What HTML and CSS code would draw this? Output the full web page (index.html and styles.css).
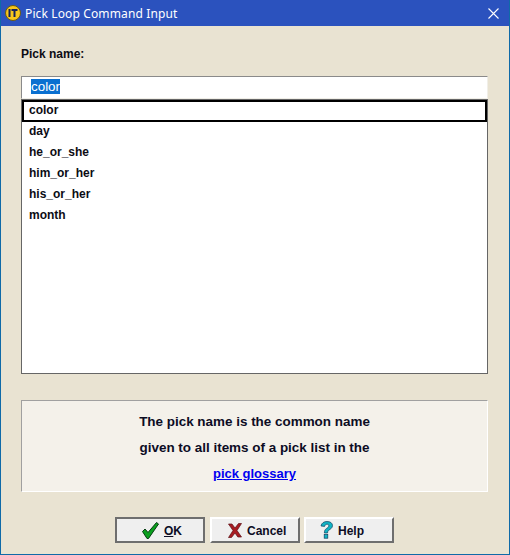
FILE: index.html
```html
<!DOCTYPE html>
<html lang="en">
<head>
    <meta charset="UTF-8">
    <meta name="viewport" content="width=device-width, initial-scale=1.0">
    <title>Pick Loop Command Input</title>
    <link rel="stylesheet" href="styles.css">
</head>
<body>
    <div class="window">
        <div class="titlebar">
            <svg class="app-icon" width="16" height="16" viewBox="0 0 16 16">
                <circle cx="8" cy="8" r="7.5" fill="#f7c61c" stroke="#6b5a10" stroke-width="1"/>
                <rect x="3.5" y="4" width="2" height="8" fill="#14205a"/>
                <rect x="6.5" y="4" width="6" height="2" fill="#14205a"/>
                <rect x="8.5" y="4" width="2" height="8" fill="#14205a"/>
            </svg>
            <span class="title">Pick Loop Command Input</span>
            <svg class="close" width="11" height="11" viewBox="0 0 11 11">
                <path d="M0.5 0.5L10.5 10.5M10.5 0.5L0.5 10.5" stroke="#fff" stroke-width="1.1" fill="none"/>
            </svg>
        </div>

        <div class="content">
            <div class="pick-label">Pick name:</div>

            <div class="pick-input"><span class="selected">color</span></div>

            <ul class="pick-list">
                <li class="current">color</li>
                <li>day</li>
                <li>he_or_she</li>
                <li>him_or_her</li>
                <li>his_or_her</li>
                <li>month</li>
            </ul>

            <div class="info">
                <p>The pick name is the common name</p>
                <p>given to all items of a pick list in the</p>
                <p><a href="#">pick glossary</a></p>
            </div>

            <div class="buttons">
                <button class="btn btn-ok">
                    <svg width="17" height="17" viewBox="0 0 17 17">
                        <path d="M0.5 9.5L3 7L6 10.5L14.5 0.5L16.5 2L6.5 16.5H5Z" fill="#0aa01e" stroke="#043a10" stroke-width="1"/>
                    </svg>
                    <span class="btn-text"><u>O</u>K</span>
                </button>
                <button class="btn btn-cancel">
                    <svg width="14" height="15" viewBox="0 0 14 15">
                        <path d="M0.5 1H4L7 5L10.5 0.5H13.5L9 7.5L13.5 14H9.8L7 10L3.5 14.5H0.5L5 7.5Z" fill="#a81c22" stroke="#5c1016" stroke-width="0.7"/>
                    </svg>
                    <span class="btn-text">Cancel</span>
                </button>
                <button class="btn btn-help">
                    <svg width="13" height="18" viewBox="0 0 13 18">
                        <path d="M1 5C1.5 2 4 0.5 7 0.5C10.5 0.5 12.5 2.2 12.5 4.6C12.5 7 10.5 8 8.8 9.2C7.8 10 7.6 10.8 7.6 12H4.4C4.4 9.8 4.8 8.6 6.6 7.4C8 6.4 8.8 5.8 8.8 4.8C8.8 3.8 8 3.2 7 3.2C5.8 3.2 5 4 4.6 5.4Z" fill="#12b4c4" stroke="#0a3f60" stroke-width="0.7"/>
                        <rect x="4.2" y="13.6" width="3.6" height="3.6" fill="#12b4c4" stroke="#0a3f60" stroke-width="0.7"/>
                    </svg>
                    <span class="btn-text">Help</span>
                </button>
            </div>
        </div>
    </div>
</body>
</html>
```

FILE: styles.css
```css
html, body {
    margin: 0;
    padding: 0;
}
body {
    width: 510px;
    height: 555px;
    overflow: hidden;
    font-family: "Liberation Sans", Arial, sans-serif;
}
.window {
    box-sizing: border-box;
    width: 510px;
    height: 555px;
    border: 1px solid #0f6aa8;
    border-top: 0;
    background-color: #e9e3d2;
}
.titlebar {
    display: flex;
    align-items: center;
    height: 26px;
    padding-left: 4px;
    padding-right: 10px;
    background-color: #2b52be;
    color: #fff;
}
.app-icon {
    margin-right: 4px;
}
.title {
    flex: 1;
    font-family: "Noto Sans", sans-serif;
    font-size: 12px;
    letter-spacing: 0.13px;
}
.content {
    padding: 0 21px 0 20px;
}
.pick-label {
    margin-top: 21px;
    height: 29px;
    line-height: 15px;
    font-size: 12px;
    font-weight: bold;
    color: #0c0c14;
}
.pick-input {
    box-sizing: border-box;
    height: 23px;
    padding: 2px 0 0 9px;
    background-color: #fff;
    border: 1px solid #f1efe8;
    border-top: 1px solid #8a8a8a;
    border-left: 1px solid #8a8a8a;
    font-size: 13.4px;
    line-height: 15px;
}
.selected {
    display: inline-block;
    background-color: #0a70d0;
    color: #fff;
}
.pick-list {
    box-sizing: border-box;
    height: 275px;
    margin: 0;
    padding: 0;
    list-style: none;
    background-color: #fff;
    border: 1px solid #666;
}
.pick-list li {
    box-sizing: border-box;
    height: 21px;
    padding-left: 7px;
    line-height: 19px;
    font-size: 12px;
    font-weight: bold;
    color: #0c0c14;
}
.pick-list .current {
    height: 22px;
    border: 2px solid #000;
    padding-left: 5px;
    line-height: 17px;
}
.info {
    box-sizing: border-box;
    height: 92px;
    margin-top: 26px;
    padding-top: 12px;
    background-color: #f4f1ea;
    border: 1px solid #fff;
    border-top: 1px solid #a0a0a0;
    border-left: 1px solid #a0a0a0;
    text-align: center;
    font-size: 13.45px;
    font-weight: bold;
    color: #0c0c24;
}
.info p {
    margin: 0;
    height: 26px;
    line-height: 18px;
}
.info a {
    font-size: 13px;
    color: #0000f0;
}
.buttons {
    display: flex;
    margin-top: 25px;
    padding-left: 94px;
}
.btn {
    display: flex;
    align-items: center;
    gap: 5px;
    box-sizing: border-box;
    width: 90px;
    height: 26px;
    padding: 0;
    background-color: #efefef;
    border: 2px solid;
    border-color: #fff #6e6e6e #6e6e6e #fff;
    font-family: "Liberation Sans", Arial, sans-serif;
    font-size: 12px;
    font-weight: bold;
    color: #0c0c24;
}
.btn-text {
    margin-top: 1px;
}
.btn-ok {
    padding-left: 25px;
    border-color: #6e6e6e;
}
.btn-cancel {
    margin-left: 5px;
    padding-left: 16px;
}
.btn-help {
    margin-left: 4px;
    padding-left: 14px;
}
```
